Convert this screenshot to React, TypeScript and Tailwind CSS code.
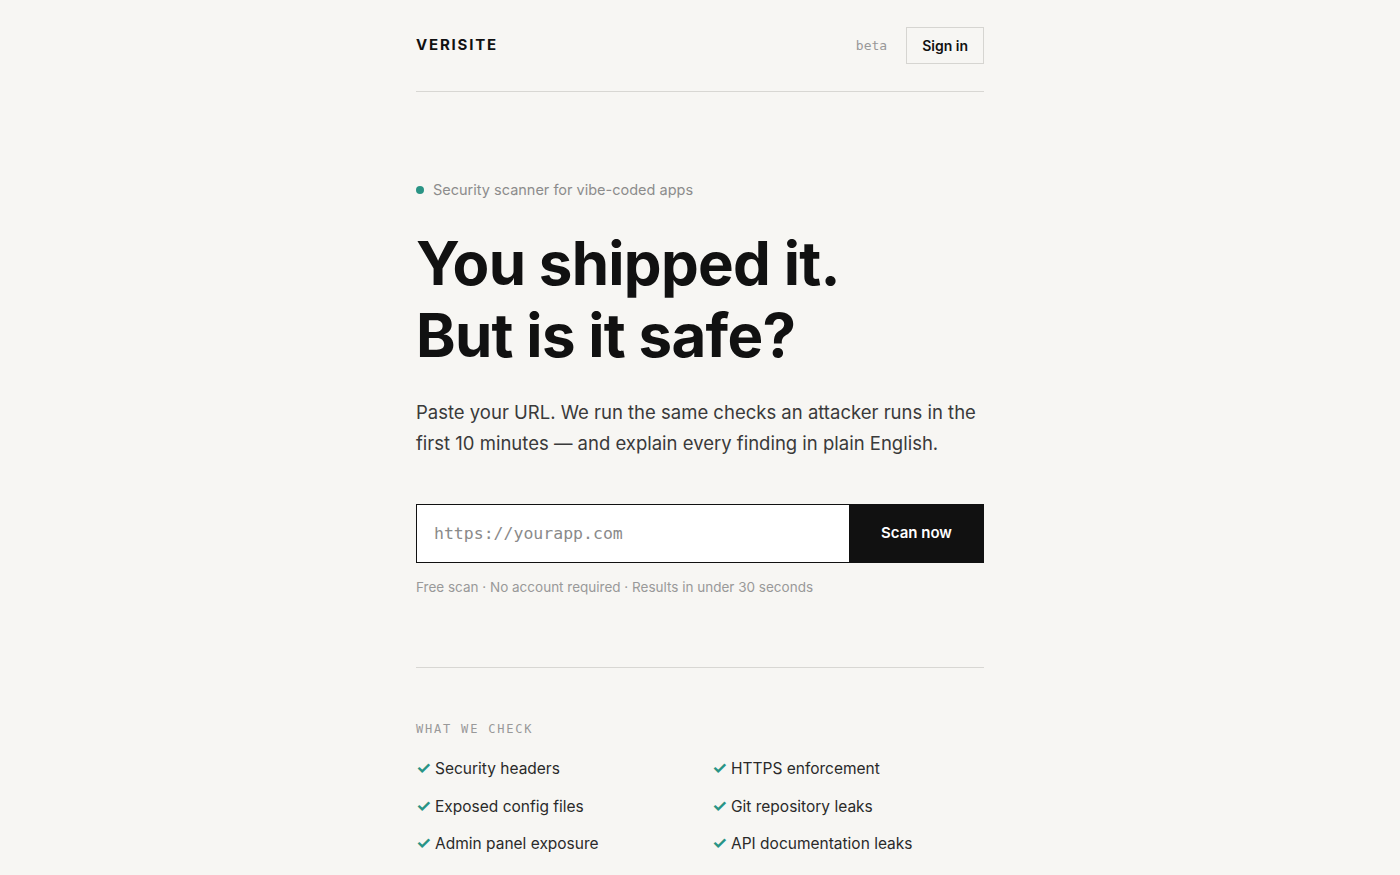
const checks = [
  'Security headers',
  'HTTPS enforcement',
  'Exposed config files',
  'Git repository leaks',
  'Admin panel exposure',
  'API documentation leaks',
];

const grotesk = "font-['Inter',sans-serif]";
const mono = "font-['DejaVu_Sans_Mono',monospace]";

export default function App() {
  return (
    <div className={`min-h-screen bg-[#f7f6f3] text-[#111] ${grotesk}`}>
      <div className="mx-auto w-[568px]">
        {/* Header */}
        <header className="flex items-center justify-between border-b border-[#d8d7d3] pt-[27px] pb-[27px]">
          <span className="text-[15px] font-bold tracking-[0.12em]">VERISITE</span>
          <div className="flex items-center gap-[19px]">
            <span className={`${mono} text-[13px] text-[#999]`}>beta</span>
            <button className="h-[37px] border border-[#d6d5d1] px-[15px] text-[14px] font-semibold">
              Sign in
            </button>
          </div>
        </header>

        {/* Hero */}
        <section className="pt-[87px]">
          <div className="flex items-center gap-[9px]">
            <span className="h-2 w-2 rounded-full bg-[#2a9485]" />
            <span className="text-[14.5px] text-[#8c8c8c]">Security scanner for vibe-coded apps</span>
          </div>
          <h1 className="mt-[26px] text-[60px] font-bold leading-[72px] tracking-[-0.012em]">
            You shipped it.
            <br />
            But is it safe?
          </h1>
          <p className="mt-[26px] text-[18.5px] leading-[31px] text-[#3a3a3a]">
            Paste your URL. We run the same checks an attacker runs in the first 10 minutes — and explain every finding in plain English.
          </p>

          <form className="mt-[45px] flex h-[59px]" onSubmit={(e) => e.preventDefault()}>
            <input
              type="text"
              placeholder="https://yourapp.com"
              className={`${mono} h-full flex-1 border-[1.5px] border-r-0 border-[#111] bg-white px-[17px] text-[16.5px] text-[#111] outline-none placeholder:text-[#8a8a8a]`}
            />
            <button className="h-full w-[135px] bg-[#111] text-[15px] font-semibold text-white">
              Scan now
            </button>
          </form>
          <p className="mt-[14px] text-[13.5px] text-[#999]">
            Free scan · No account required · Results in under 30 seconds
          </p>
        </section>

        {/* What we check */}
        <section className="mt-[70px] border-t border-[#d8d7d3] pt-[52px]">
          <h2 className={`${mono} text-[12px] tracking-[0.15em] text-[#999]`}>WHAT WE CHECK</h2>
          <ul className="mt-[18px] grid grid-cols-2 gap-x-6 gap-y-[12px]">
            {checks.map((c) => (
              <li key={c} className="flex items-center gap-[4px] text-[15.5px] text-[#2a2a2a]">
                <span className="text-[17px] font-bold text-[#2a9485]">✓</span>
                {c}
              </li>
            ))}
          </ul>
        </section>
      </div>
    </div>
  );
}
